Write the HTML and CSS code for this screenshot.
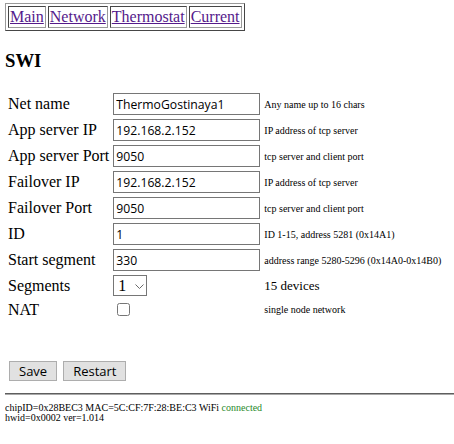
FILE: index.html
```html
<!DOCTYPE html>
<html>
<head>
<meta charset="utf-8">
<title>SWI</title>
<link rel="stylesheet" href="styles.css">
</head>
<body>
<table class="nav">
  <tr>
    <td><a href="#">Main</a></td>
    <td><a href="#">Network</a></td>
    <td><a href="#">Thermostat</a></td>
    <td><a href="#">Current</a></td>
  </tr>
</table>
<h3 class="title">SWI</h3>
<form class="form">
  <table class="fields">
    <tr>
      <td class="label">Net name</td>
      <td><input class="field" type="text" value="ThermoGostinaya1"></td>
      <td class="help">Any name up to 16 chars</td>
    </tr>
    <tr>
      <td class="label">App server IP</td>
      <td><input class="field" type="text" value="192.168.2.152"></td>
      <td class="help">IP address of tcp server</td>
    </tr>
    <tr>
      <td class="label">App server Port</td>
      <td><input class="field" type="text" value="9050"></td>
      <td class="help">tcp server and client port</td>
    </tr>
    <tr>
      <td class="label">Failover IP</td>
      <td><input class="field" type="text" value="192.168.2.152"></td>
      <td class="help">IP address of tcp server</td>
    </tr>
    <tr>
      <td class="label">Failover Port</td>
      <td><input class="field" type="text" value="9050"></td>
      <td class="help">tcp server and client port</td>
    </tr>
    <tr>
      <td class="label">ID</td>
      <td><input class="field" type="text" value="1"></td>
      <td class="help">ID 1-15, address 5281 (0x14A1)</td>
    </tr>
    <tr>
      <td class="label">Start segment</td>
      <td><input class="field" type="text" value="330"></td>
      <td class="help">address range 5280-5296 (0x14A0-0x14B0)</td>
    </tr>
    <tr>
      <td class="label">Segments</td>
      <td>
        <span class="select-wrap">
          <select class="select">
            <option>1</option>
            <option>2</option>
            <option>3</option>
          </select>
          <svg class="chev" width="9" height="5" viewBox="0 0 9 5"><path d="M0.5 0.5 L4.5 4.5 L8.5 0.5" fill="none" stroke="#6a6a6a" stroke-width="1"/></svg>
        </span>
      </td>
      <td class="help-big">15 devices</td>
    </tr>
    <tr>
      <td class="label">NAT</td>
      <td><input class="check" type="checkbox"></td>
      <td class="help">single node network</td>
    </tr>
  </table>
  <div class="buttons">
    <button class="btn" type="button">Save</button>
    <button class="btn" type="button">Restart</button>
  </div>
</form>
<hr class="rule">
<div class="footer">
  <div>chipID=0x28BEC3 MAC=5C:CF:7F:28:BE:C3 WiFi <span class="ok">connected</span></div>
  <div>hwid=0x0002 ver=1.014</div>
</div>
</body>
</html>
```

FILE: styles.css
```css
html, body {
  background: #ffffff;
}
body {
  margin: 3px 0 0 5px;
  font-family: "Liberation Serif", "Times New Roman", serif;
  font-size: 16px;
  color: #000;
}
.nav {
  border: 1px outset #9a9a9a;
  border-spacing: 2px;
  border-collapse: separate;
}
.nav td {
  border: 1px inset #9a9a9a;
  padding: 1px;
  line-height: 18px;
}
.nav a {
  color: #551a8b;
  text-decoration: underline;
}
.title {
  font-size: 18.72px;
  font-weight: bold;
  margin: 18.72px 0;
  line-height: 22px;
}
.form {
  margin: 0;
}
.fields {
  border-spacing: 2px;
  border-collapse: separate;
}
.fields td {
  padding: 1px;
  vertical-align: middle;
}
.label {
  font-size: 16px;
  white-space: nowrap;
  line-height: 18px;
}
.field {
  box-sizing: border-box;
  width: 147px;
  height: 22px;
  margin: 0;
  padding: 1px 2px;
  border: 1px solid #767676;
  border-radius: 0;
  font-family: "Open Sans", "Noto Sans", sans-serif;
  font-size: 12.2px;
  color: #000;
  display: block;
}
.help {
  font-size: 10px;
  white-space: nowrap;
}
.help-big {
  font-size: 13px;
  white-space: nowrap;
}
.select-wrap {
  position: relative;
  display: block;
  width: 34px;
  height: 21px;
}
.select {
  appearance: none;
  -webkit-appearance: none;
  box-sizing: border-box;
  width: 34px;
  height: 21px;
  margin: 0;
  padding: 0 0 0 4px;
  border: 1px solid #767676;
  border-radius: 0;
  background: #fff;
  font-family: "Liberation Serif", serif;
  font-size: 16px;
  color: #000;
  display: block;
}
.chev {
  position: absolute;
  left: 22px;
  top: 9px;
  pointer-events: none;
}
.check {
  display: block;
  width: 13px;
  height: 13px;
  margin: 3px 3px 3px 4px;
}
.buttons {
  display: flex;
  gap: 6px;
  margin: 39px 0 0 4px;
  padding-bottom: 4px;
}
.btn {
  box-sizing: border-box;
  height: 20px;
  margin: 0;
  padding: 0 9px;
  border: 1px solid #adadad;
  border-radius: 0;
  background: #e1e1e1;
  font-family: "Open Sans", "Noto Sans", sans-serif;
  font-size: 13px;
  line-height: 16px;
  color: #000;
}
.rule {
  margin: 8px 0;
  height: 0;
  border: 0;
  border-top: 1px solid #5e5e5e;
  border-bottom: 1px solid #a8a8a8;
}
.footer {
  font-size: 10px;
  line-height: 10px;
}
.ok {
  color: #2a8a2a;
}
```
